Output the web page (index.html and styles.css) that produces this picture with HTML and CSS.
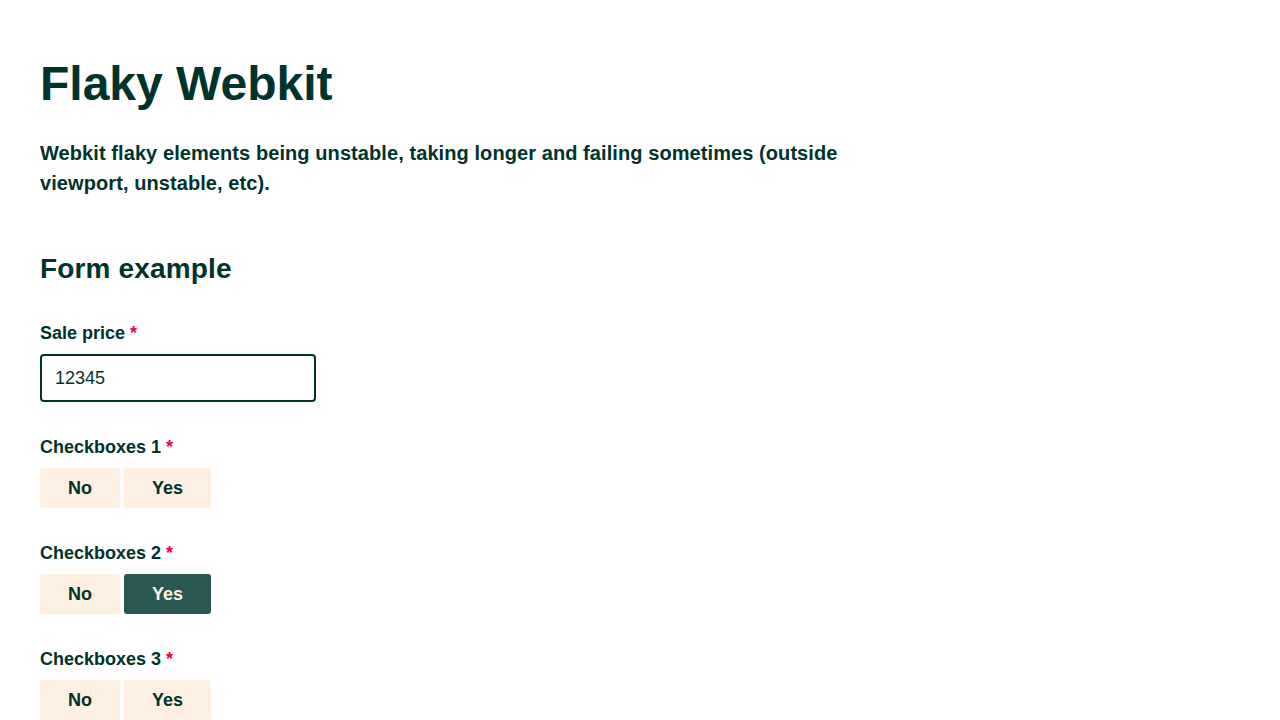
FILE: index.html
```html
<!DOCTYPE html>
<html lang="en">
<head>
<meta charset="utf-8">
<title>Flaky Webkit</title>
<link rel="stylesheet" href="styles.css">
</head>
<body>
<main class="page">
  <h1 class="title">Flaky Webkit</h1>
  <p class="intro">Webkit flaky elements being unstable, taking longer and failing sometimes (outside viewport, unstable, etc).</p>
  <h2 class="section-title">Form example</h2>
  <form class="form">
    <div class="field">
      <label class="label" for="price">Sale price <span class="req">*</span></label>
      <input class="input" id="price" type="text" value="12345">
    </div>
    <div class="field">
      <div class="label">Checkboxes 1 <span class="req">*</span></div>
      <div class="toggle-group">
        <button type="button" class="toggle">No</button>
        <button type="button" class="toggle">Yes</button>
      </div>
    </div>
    <div class="field">
      <div class="label">Checkboxes 2 <span class="req">*</span></div>
      <div class="toggle-group">
        <button type="button" class="toggle">No</button>
        <button type="button" class="toggle toggle-active">Yes</button>
      </div>
    </div>
    <div class="field">
      <div class="label">Checkboxes 3 <span class="req">*</span></div>
      <div class="toggle-group">
        <button type="button" class="toggle">No</button>
        <button type="button" class="toggle">Yes</button>
      </div>
    </div>
  </form>
</main>
</body>
</html>
```

FILE: styles.css
```css
html, body {
  margin: 0;
  padding: 0;
  background: #ffffff;
}

body {
  font-family: "Liberation Sans", Arial, sans-serif;
  color: #00332b;
}

.page {
  padding: 56px 40px 40px;
}

.title {
  margin: 0 0 26px;
  font-size: 48px;
  line-height: 56px;
  font-weight: 700;
}

.intro {
  margin: 0 0 53px;
  max-width: 840px;
  font-size: 20px;
  line-height: 30px;
  font-weight: 700;
  letter-spacing: 0.08px;
}

.section-title {
  margin: 0 0 33px;
  font-size: 28px;
  line-height: 36px;
  font-weight: 700;
  letter-spacing: 0.15px;
}

.form {
  display: flex;
  flex-direction: column;
  gap: 32px;
}

.field {
  display: flex;
  flex-direction: column;
  align-items: flex-start;
}

.label {
  display: block;
  margin-bottom: 8px;
  font-size: 18px;
  line-height: 26px;
  font-weight: 700;
}

.req {
  color: #e8004f;
}

.input {
  box-sizing: border-box;
  width: 276px;
  height: 48px;
  margin: 0;
  padding: 0 13px;
  border: 2px solid #00332b;
  border-radius: 4px;
  font-family: "Liberation Sans", Arial, sans-serif;
  font-size: 18px;
  color: #00332b;
  background: #ffffff;
  outline: none;
}

.toggle-group {
  display: flex;
  gap: 4px;
}

.toggle {
  box-sizing: border-box;
  min-width: 80px;
  height: 40px;
  margin: 0;
  padding: 1px 28px 0;
  border: 0;
  border-radius: 3px;
  background: #fdf0e0;
  color: #00332b;
  font-family: "Liberation Sans", Arial, sans-serif;
  font-size: 18px;
  font-weight: 700;
  cursor: pointer;
}

.toggle-active {
  background: #2b5752;
  color: #fdf0e0;
}
```
